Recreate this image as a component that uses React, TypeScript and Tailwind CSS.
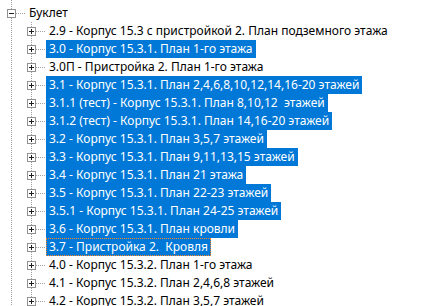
import React from 'react';

type Node = {
  label: string;
  depth: number;
  expanded?: boolean;
  selected?: boolean;
  focused?: boolean;
  last?: boolean;
};

const ROWS: Node[] = [
  { label: '', depth: 0 },
  { label: 'Буклет', depth: 0, expanded: true },
  { label: '2.9 - Корпус 15.3 с пристройкой 2. План подземного этажа', depth: 1 },
  { label: '3.0 - Корпус 15.3.1. План 1-го этажа', depth: 1, selected: true },
  { label: '3.0П - Пристройка 2. План 1-го этажа', depth: 1 },
  { label: '3.1 - Корпус 15.3.1. План 2,4,6,8,10,12,14,16-20 этажей', depth: 1, selected: true },
  { label: '3.1.1 (тест) - Корпус 15.3.1. План 8,10,12  этажей', depth: 1, selected: true },
  { label: '3.1.2 (тест) - Корпус 15.3.1. План 14,16-20 этажей', depth: 1, selected: true },
  { label: '3.2 - Корпус 15.3.1. План 3,5,7 этажей', depth: 1, selected: true },
  { label: '3.3 - Корпус 15.3.1. План 9,11,13,15 этажей', depth: 1, selected: true },
  { label: '3.4 - Корпус 15.3.1. План 21 этажа', depth: 1, selected: true },
  { label: '3.5 - Корпус 15.3.1. План 22-23 этажей', depth: 1, selected: true },
  { label: '3.5.1 - Корпус 15.3.1. План 24-25 этажей', depth: 1, selected: true },
  { label: '3.6 - Корпус 15.3.1. План кровли', depth: 1, selected: true },
  { label: '3.7 - Пристройка 2.  Кровля', depth: 1, selected: true, focused: true },
  { label: '4.0 - Корпус 15.3.2. План 1-го этажа', depth: 1 },
  { label: '4.1 - Корпус 15.3.2. План 2,4,6,8 этажей', depth: 1 },
  { label: '4.2 - Корпус 15.3.2. План 3,5,7 этажей', depth: 1 },
];

// 1px-on / 1px-off dotted tree lines
const DOT_V =
  'bg-[repeating-linear-gradient(to_bottom,#a0a0a0_0px,#a0a0a0_1px,transparent_1px,transparent_2px)]';
const DOT_H =
  'bg-[repeating-linear-gradient(to_right,#a0a0a0_0px,#a0a0a0_1px,transparent_1px,transparent_2px)]';

const ExpandBox = ({ expanded }: { expanded?: boolean }) => (
  <svg width="9" height="9" viewBox="0 0 9 9" className="ml-[7px] shrink-0">
    <rect x="0.5" y="0.5" width="8" height="8" fill="#fff" stroke="#919191" />
    <path d="M2 4.5h5" stroke="#1e1e1e" />
    {!expanded && <path d="M4.5 2v5" stroke="#1e1e1e" />}
  </svg>
);

const TreeRow = ({ node }: { node: Node }) => (
  <div className="flex h-[18px] items-stretch">
    {/* parent levels */}
    {Array.from({ length: node.depth }).map((_, i) => (
      <div key={i} className="w-[20px] shrink-0">
        <div className={`ml-[11px] h-full w-px ${DOT_V}`} />
      </div>
    ))}

    {/* own connector + expander */}
    <div className="flex w-[26px] shrink-0 flex-col">
      <div className={`ml-[11px] h-[5px] w-px ${DOT_V}`} />
      <div className="flex h-[9px] items-center">
        <ExpandBox expanded={node.expanded} />
        <div className={`h-px flex-1 ${DOT_H}`} />
      </div>
      <div className={`ml-[11px] w-px flex-1 ${node.last ? '' : DOT_V}`} />
    </div>

    <div
      className={`h-[18px] whitespace-pre px-[3px] text-[12px] leading-[18px] ${
        node.selected ? 'bg-[#0078d7] text-white' : 'text-black'
      } ${node.focused ? 'outline-1 -outline-offset-1 outline-dotted outline-[#ff8728]' : ''}`}
    >
      {node.label}
    </div>
  </div>
);

export default function App() {
  return (
    <div
      className="h-[306px] w-[434px] overflow-hidden bg-white"
      style={{ fontFamily: '"Noto Sans", "Open Sans", sans-serif' }}
    >
      <div className="-mt-[14px]">
        {ROWS.map((node, i) => (
          <TreeRow key={i} node={node} />
        ))}
      </div>
    </div>
  );
}
